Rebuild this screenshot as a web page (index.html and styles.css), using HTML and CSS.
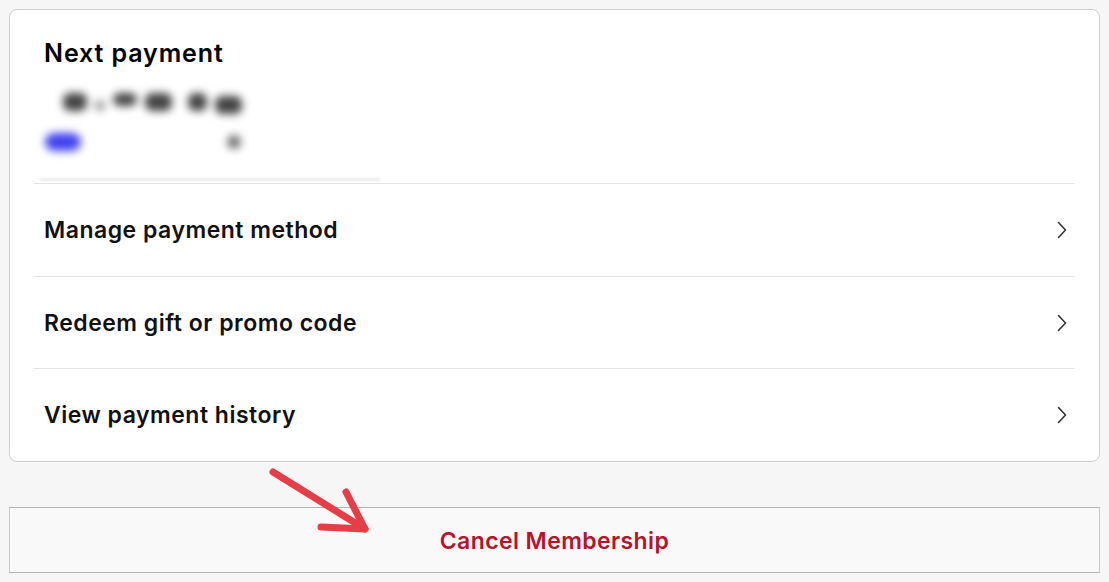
FILE: index.html
```html
<!DOCTYPE html>
<html lang="en">
<head>
<meta charset="utf-8">
<link rel="stylesheet" href="styles.css">
</head>
<body>
<div class="page">
  <div class="card">
    <div class="next">
      <h2 class="title">Next payment</h2>
      <div class="blur-line1" aria-hidden="true">
        <span class="blob w24"></span>
        <span class="blob w10 low light"></span>
        <span class="blob w24 high"></span>
        <span class="blob w26"></span>
        <span class="blob w18"></span>
        <span class="blob w26 low"></span>
      </div>
      <div class="blur-line2" aria-hidden="true">
        <span class="blue"></span>
        <span class="greydot"></span>
      </div>
      <div class="blur-rule"></div>
    </div>
    <div class="row"><span class="label">Manage payment method</span><svg class="chev" viewBox="0 0 12 18" width="12" height="18"><path d="M2.5 1.5 L9.5 9 L2.5 16.5" fill="none" stroke="#333" stroke-width="1.6" stroke-linecap="round" stroke-linejoin="round"/></svg></div>
    <div class="row"><span class="label">Redeem gift or promo code</span><svg class="chev" viewBox="0 0 12 18" width="12" height="18"><path d="M2.5 1.5 L9.5 9 L2.5 16.5" fill="none" stroke="#333" stroke-width="1.6" stroke-linecap="round" stroke-linejoin="round"/></svg></div>
    <div class="row last"><span class="label">View payment history</span><svg class="chev" viewBox="0 0 12 18" width="12" height="18"><path d="M2.5 1.5 L9.5 9 L2.5 16.5" fill="none" stroke="#333" stroke-width="1.6" stroke-linecap="round" stroke-linejoin="round"/></svg></div>
  </div>
  <button class="cancel">Cancel Membership</button>
  <svg class="arrow" width="130" height="90" viewBox="0 0 130 90">
    <g fill="none" stroke="#e63e46" stroke-width="7" stroke-linecap="round" stroke-linejoin="round">
      <path d="M9 8 L101 65"/>
      <path d="M82 28 L101 65 L57 63"/>
    </g>
  </svg>
</div>
</body>
</html>
```

FILE: styles.css
```css
* { box-sizing: border-box; }
html, body { margin: 0; padding: 0; }
body {
  background: #f6f6f6;
  font-family: Inter, "Open Sans", "Liberation Sans", sans-serif;
  width: 1109px;
  height: 582px;
  overflow: hidden;
}
.page {
  position: relative;
  padding: 9px 9px 0 9px;
  display: flex;
  flex-direction: column;
}
.card {
  background: #fff;
  border: 1px solid #cfcfcf;
  border-radius: 8px;
  height: 453px;
  display: flex;
  flex-direction: column;
  padding: 0 24px;
}
.next {
  height: 174px;
  padding: 26px 0 0 10px;
  border-bottom: 1px solid #e3e3e3;
  display: flex;
  flex-direction: column;
  position: relative;
}
.title {
  margin: 0;
  font-size: 25px;
  font-weight: 600;
  line-height: 34px;
  letter-spacing: 0.9px;
  color: #000;
}
.blur-line1 {
  margin-top: 20px;
  padding-left: 19px;
  height: 24px;
  display: flex;
  align-items: center;
  gap: 8px;
  filter: blur(4px);
}
.blob {
  display: block;
  height: 18px;
  background: #444;
  border-radius: 7px;
}
.blob.w24 { width: 24px; }
.blob.w10 { width: 10px; height: 11px; }
.blob.w26 { width: 27px; }
.blob.w18 { width: 19px; margin-left: 8px; }
.blob.low { transform: translateY(3px); }
.blob.high { transform: translateY(-3px); height: 13px; }
.blob.light { background: #999; }
.blur-line2 {
  margin-top: 17px;
  height: 22px;
  display: flex;
  align-items: center;
  filter: blur(4px);
}
.blue {
  display: block;
  width: 36px;
  height: 18px;
  margin-left: 1px;
  background: #4143ee;
  border-radius: 9px;
}
.greydot {
  display: block;
  width: 14px;
  height: 14px;
  margin-left: 146px;
  background: #707070;
  border-radius: 50%;
}
.blur-rule {
  position: absolute;
  left: 6px;
  bottom: 2px;
  width: 340px;
  height: 3px;
  background: #ececec;
  filter: blur(1px);
}
.row {
  flex: 1;
  display: flex;
  align-items: center;
  justify-content: space-between;
  padding: 0 7px 0 10px;
  border-bottom: 1px solid #e3e3e3;
}
.row.last { border-bottom: none; }
.label {
  font-size: 23px;
  font-weight: 600;
  letter-spacing: 0.5px;
  color: #111;
}
.chev { display: block; }
.cancel {
  margin-top: 45px;
  height: 66px;
  width: 100%;
  background: #f9f9f9;
  border: 1px solid #b3b3b3;
  border-left-color: #c8c8c8;
  border-right-color: #c8c8c8;
  color: #b8132b;
  font-family: inherit;
  font-size: 23px;
  font-weight: 600;
  letter-spacing: 0.4px;
  padding: 2px 0 0 0;
}
.arrow {
  position: absolute;
  left: 264px;
  top: 464px;
}
```
